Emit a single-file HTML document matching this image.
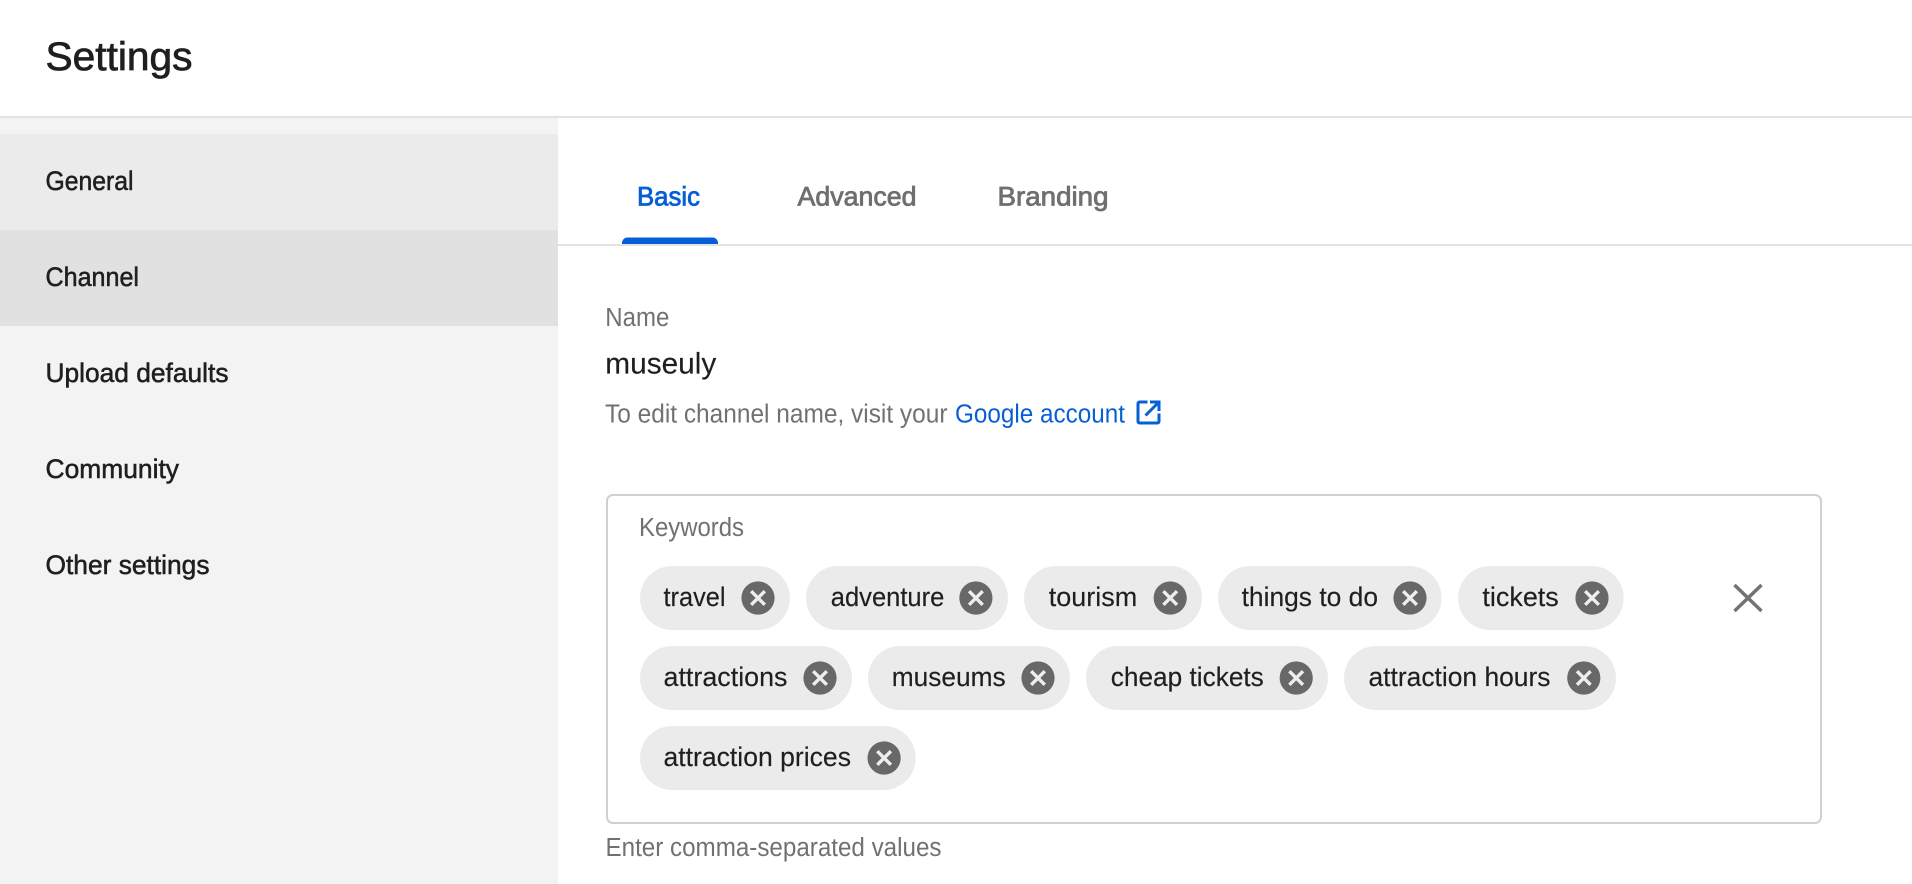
<!DOCTYPE html>
<html lang="en">
<head>
<meta charset="utf-8">
<title>Settings</title>
<style>
html,body{margin:0;padding:0;width:1912px;height:884px;overflow:hidden;background:#fff}
svg{display:block}
text{font-family:"Liberation Sans",Arial,sans-serif;white-space:pre}
.nav{font-size:27px;fill:#1f1f1f;stroke:#1f1f1f;stroke-width:.55px}
.tab{font-size:27px;fill:#6f6f6f;stroke:#6f6f6f;stroke-width:.8px}
.sec{font-size:25.500px;fill:#717171}
.chip{font-size:27px;fill:#1f1f1f;stroke:#1f1f1f;stroke-width:.15px}
</style>
</head>
<body>
<svg width="1912" height="884" viewBox="0 0 1912 884" xmlns="http://www.w3.org/2000/svg">
<defs>
<g id="c">
<circle cx="0" cy="0" r="16.6" fill="#686868"/>
<path d="M-6.800-6.800L6.800 6.800M6.800-6.800L-6.800 6.800" stroke="#eeeeee" stroke-width="3.400" fill="none"/>
</g>
</defs>
<rect width="1912" height="884" fill="#fff"/>
<rect x="0" y="118" width="558" height="766" fill="#f3f3f3"/>
<rect x="0" y="134" width="558" height="96" fill="#ebebeb"/>
<rect x="0" y="230" width="558" height="96" fill="#e1e1e1"/>
<rect x="0" y="116" width="1912" height="2" fill="#e2e2e2"/>
<rect x="558" y="244" width="1354" height="2" fill="#e2e2e2"/>

<text x="45.500" y="70" class="nav" style="font-size:40px;stroke-width:.75px" textLength="147" lengthAdjust="spacingAndGlyphs">Settings</text>
<text x="45.500" y="190" class="nav" textLength="88" lengthAdjust="spacingAndGlyphs">General</text>
<text x="45.500" y="286" class="nav" textLength="93.500" lengthAdjust="spacingAndGlyphs">Channel</text>
<text x="45.500" y="382" class="nav" textLength="183" lengthAdjust="spacingAndGlyphs">Upload defaults</text>
<text x="45.500" y="478" class="nav" textLength="133.500" lengthAdjust="spacingAndGlyphs">Community</text>
<text x="45.500" y="574" class="nav" textLength="164" lengthAdjust="spacingAndGlyphs">Other settings</text>

<text x="637" y="205.700" class="tab" style="fill:#065fd4;stroke:#065fd4" textLength="63" lengthAdjust="spacingAndGlyphs">Basic</text>
<text x="797.500" y="205.700" class="tab" textLength="119" lengthAdjust="spacingAndGlyphs">Advanced</text>
<text x="997.500" y="205.700" class="tab" textLength="111" lengthAdjust="spacingAndGlyphs">Branding</text>
<path d="M622 244v-1a5.500 5.500 0 0 1 5.500-5.500h85a5.500 5.500 0 0 1 5.500 5.500v1z" fill="#065fd4"/>

<text x="605.300" y="326" class="sec" textLength="64" lengthAdjust="spacingAndGlyphs">Name</text>
<text x="605.300" y="373.300" style="font-size:30px;fill:#1f1f1f;stroke:#1f1f1f;stroke-width:.15px" textLength="111" lengthAdjust="spacingAndGlyphs">museuly</text>
<text x="605" y="422.300" class="sec" textLength="342.500" lengthAdjust="spacingAndGlyphs">To edit channel name, visit your</text>
<text x="955" y="422.300" class="sec" style="fill:#065fd4" textLength="170" lengthAdjust="spacingAndGlyphs">Google account</text>
<path d="M1147.500 402h-8a1.500 1.500 0 0 0-1.500 1.500v18a1.500 1.500 0 0 0 1.500 1.500h18a1.500 1.500 0 0 0 1.500-1.500v-8" fill="none" stroke="#065fd4" stroke-width="3"/>
<path d="M1150 402h9v9M1158.500 402.500l-13 13" fill="none" stroke="#065fd4" stroke-width="3"/>

<rect x="607" y="495" width="1214" height="328" rx="6" fill="#fff" stroke="#d0d0d0" stroke-width="2"/>
<text x="639" y="536" class="sec" textLength="105" lengthAdjust="spacingAndGlyphs">Keywords</text>

<rect x="640" y="566" width="150" height="64" rx="32" fill="#ebebeb"/>
<text x="663.500" y="606" class="chip" textLength="62" lengthAdjust="spacingAndGlyphs">travel</text>
<use href="#c" x="758" y="598"/>
<rect x="806" y="566" width="202" height="64" rx="32" fill="#ebebeb"/>
<text x="830.800" y="606" class="chip" textLength="113.500" lengthAdjust="spacingAndGlyphs">adventure</text>
<use href="#c" x="975.900" y="598"/>
<rect x="1024" y="566" width="178" height="64" rx="32" fill="#ebebeb"/>
<text x="1048.700" y="606" class="chip" textLength="88.500" lengthAdjust="spacingAndGlyphs">tourism</text>
<use href="#c" x="1170.200" y="598"/>
<rect x="1218" y="566" width="223.600" height="64" rx="32" fill="#ebebeb"/>
<text x="1241.600" y="606" class="chip" textLength="136.400" lengthAdjust="spacingAndGlyphs">things to do</text>
<use href="#c" x="1410" y="598"/>
<rect x="1458" y="566" width="165.700" height="64" rx="32" fill="#ebebeb"/>
<text x="1482.400" y="606" class="chip" textLength="76.400" lengthAdjust="spacingAndGlyphs">tickets</text>
<use href="#c" x="1592" y="598"/>

<rect x="640" y="646" width="212" height="64" rx="32" fill="#ebebeb"/>
<text x="663.500" y="686" class="chip" textLength="124" lengthAdjust="spacingAndGlyphs">attractions</text>
<use href="#c" x="820" y="678"/>
<rect x="868" y="646" width="202" height="64" rx="32" fill="#ebebeb"/>
<text x="891.700" y="686" class="chip" textLength="114" lengthAdjust="spacingAndGlyphs">museums</text>
<use href="#c" x="1038" y="678"/>
<rect x="1086" y="646" width="242" height="64" rx="32" fill="#ebebeb"/>
<text x="1110.800" y="686" class="chip" textLength="153" lengthAdjust="spacingAndGlyphs">cheap tickets</text>
<use href="#c" x="1296.200" y="678"/>
<rect x="1344" y="646" width="272" height="64" rx="32" fill="#ebebeb"/>
<text x="1368.500" y="686" class="chip" textLength="182" lengthAdjust="spacingAndGlyphs">attraction hours</text>
<use href="#c" x="1583.800" y="678"/>

<rect x="640" y="726" width="275.700" height="64" rx="32" fill="#ebebeb"/>
<text x="663.500" y="766" class="chip" textLength="187.500" lengthAdjust="spacingAndGlyphs">attraction prices</text>
<use href="#c" x="884.100" y="758"/>

<path d="M1734.500 585L1761.500 611M1761.500 585L1734.500 611" fill="none" stroke="#727272" stroke-width="3.500"/>

<text x="605.500" y="856" class="sec" textLength="336" lengthAdjust="spacingAndGlyphs">Enter comma-separated values</text>
</svg>
</body>
</html>
